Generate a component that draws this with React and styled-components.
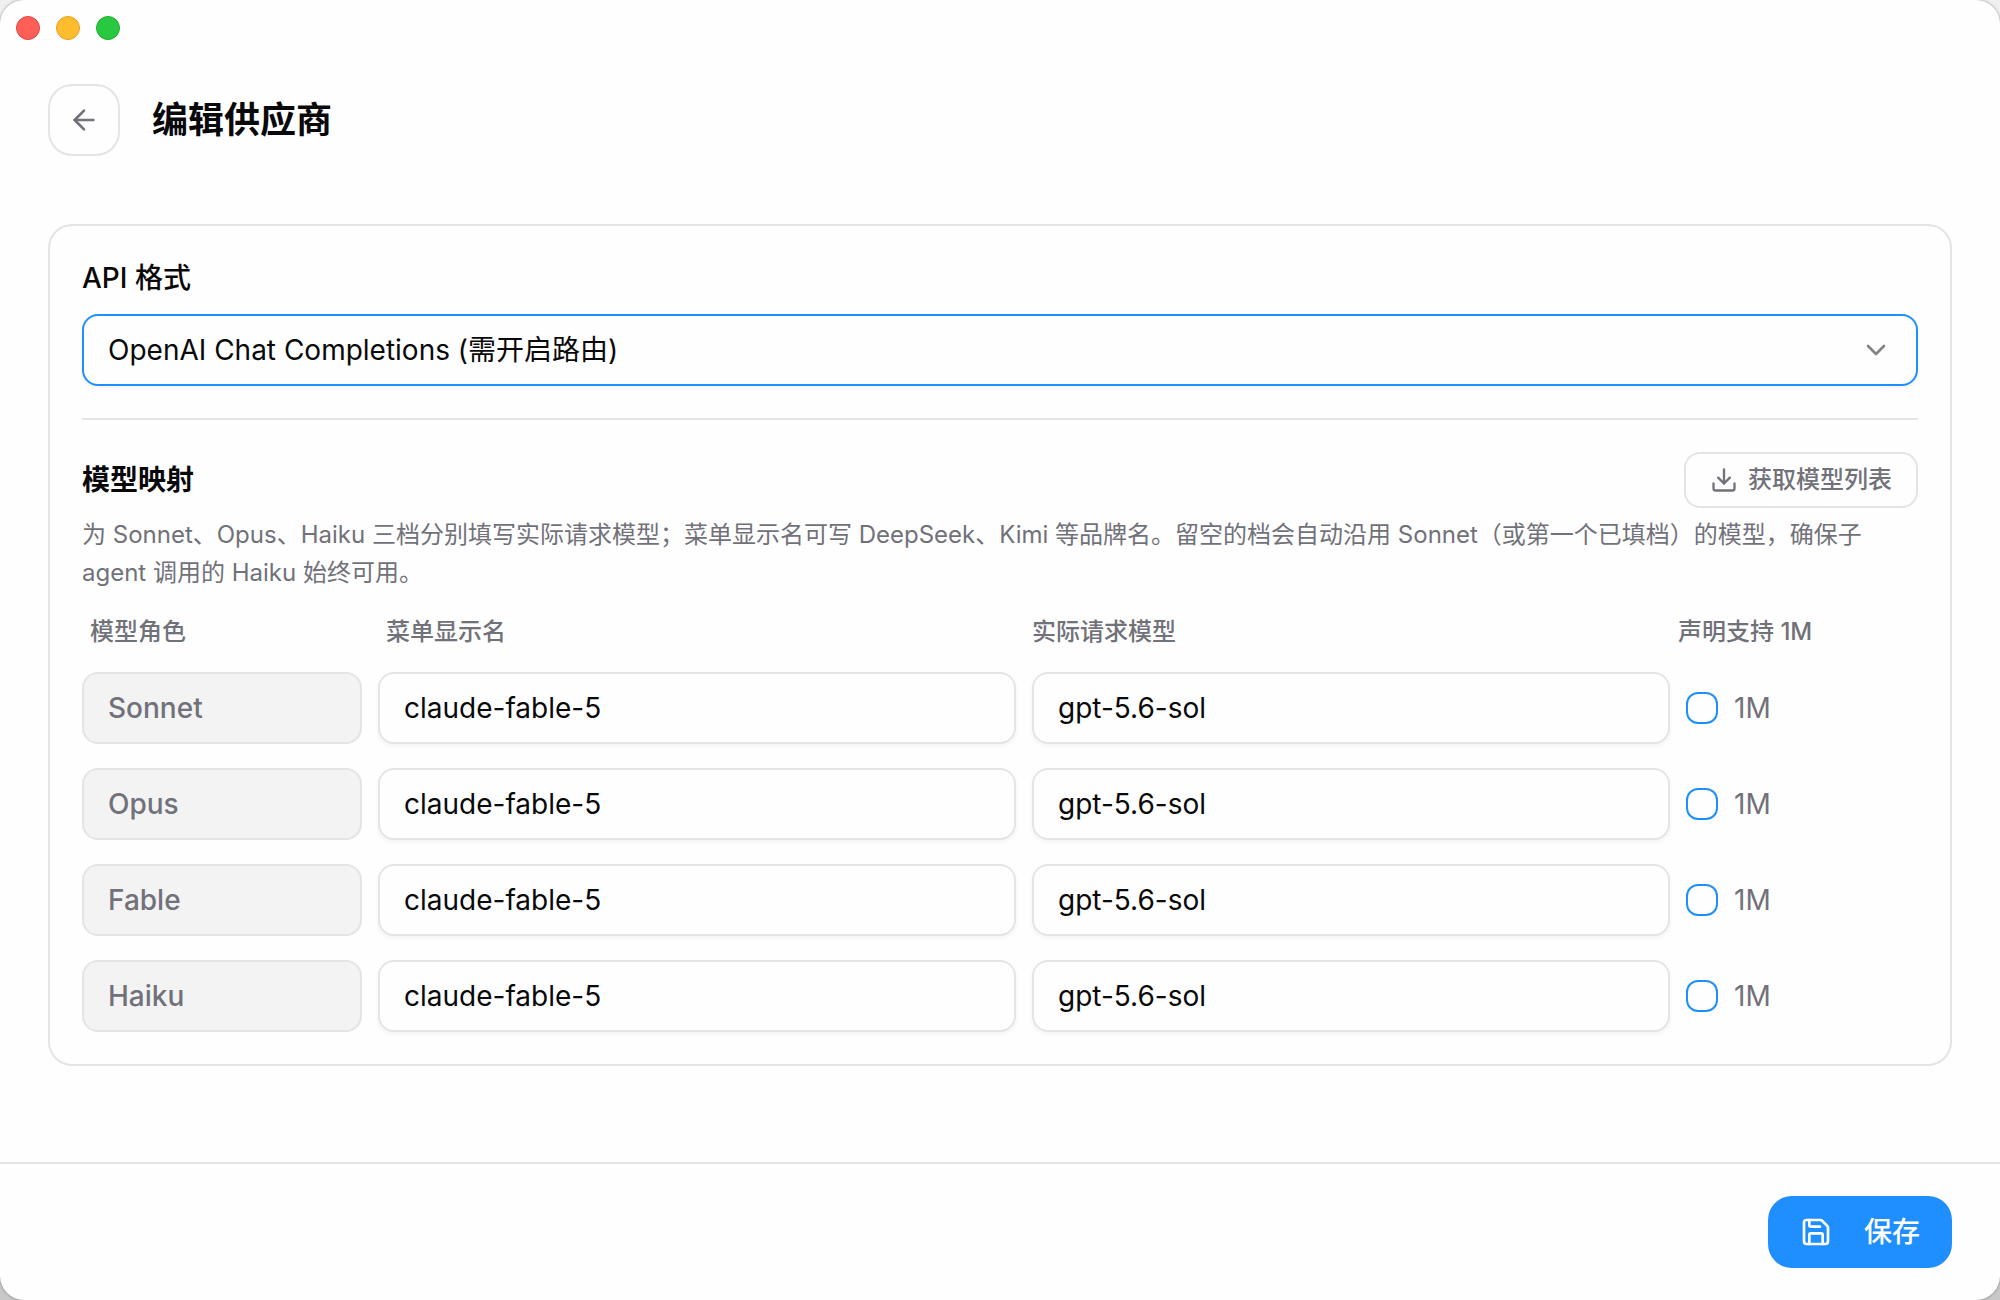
import React, { useState } from "react";
import styled, { createGlobalStyle } from "styled-components";
import { ArrowLeft, ChevronDown, Download, Save } from "lucide-react";

const initialRows = [
  { role: "Sonnet", label: "claude-fable-5", model: "gpt-5.6-sol", oneM: false },
  { role: "Opus", label: "claude-fable-5", model: "gpt-5.6-sol", oneM: false },
  { role: "Fable", label: "claude-fable-5", model: "gpt-5.6-sol", oneM: false },
  { role: "Haiku", label: "claude-fable-5", model: "gpt-5.6-sol", oneM: false },
];

function App() {
  const [format, setFormat] = useState("openai_chat");
  const [rows, setRows] = useState(initialRows);

  const updateRow = (role, patch) => {
    setRows(rows.map((row) => (row.role === role ? { ...row, ...patch } : row)));
  };

  return (
    <>
      <GlobalStyle />
      <Window>
        <TitleBar>
          <TrafficLight $color="#ff5f57" $edge="#e2463f" />
          <TrafficLight $color="#febc2e" $edge="#e0a028" />
          <TrafficLight $color="#28c840" $edge="#1eac2f" />
        </TitleBar>

        <Header>
          <BackButton type="button" aria-label="返回">
            <ArrowLeft size={32} />
          </BackButton>
          <Title>编辑供应商</Title>
        </Header>

        <Main>
          <Card>
            <FieldLabel htmlFor="api-format">API 格式</FieldLabel>
            <SelectWrapper>
              <Select
                id="api-format"
                value={format}
                onChange={(e) => setFormat(e.target.value)}
              >
                <option value="openai_chat">OpenAI Chat Completions (需开启路由)</option>
              </Select>
              <ChevronDown size={32} />
            </SelectWrapper>

            <Divider />

            <SectionHeader>
              <SectionTitle>模型映射</SectionTitle>
              <FetchButton type="button">
                <Download size={28} />
                获取模型列表
              </FetchButton>
            </SectionHeader>
            <Hint>
              为 Sonnet、Opus、Haiku 三档分别填写实际请求模型；菜单显示名可写 DeepSeek、Kimi
              等品牌名。留空的档会自动沿用 Sonnet（或第一个已填档）的模型，确保子 agent 调用的
              Haiku 始终可用。
            </Hint>

            <ColumnHeads>
              <span>模型角色</span>
              <span>菜单显示名</span>
              <span>实际请求模型</span>
              <span>声明支持 1M</span>
            </ColumnHeads>
            <Rows>
              {rows.map((row) => (
                <Row key={row.role}>
                  <RoleName>{row.role}</RoleName>
                  <TextInput
                    type="text"
                    aria-label={`${row.role} 菜单显示名`}
                    value={row.label}
                    onChange={(e) => updateRow(row.role, { label: e.target.value })}
                  />
                  <TextInput
                    type="text"
                    aria-label={`${row.role} 实际请求模型`}
                    value={row.model}
                    onChange={(e) => updateRow(row.role, { model: e.target.value })}
                  />
                  <CheckLabel>
                    <Checkbox
                      type="checkbox"
                      checked={row.oneM}
                      onChange={(e) => updateRow(row.role, { oneM: e.target.checked })}
                    />
                    1M
                  </CheckLabel>
                </Row>
              ))}
            </Rows>
          </Card>
        </Main>

        <Footer>
          <SaveButton type="button">
            <Save size={32} />
            保存
          </SaveButton>
        </Footer>
      </Window>
    </>
  );
}

const GlobalStyle = createGlobalStyle`
  *,
  *::before,
  *::after {
    box-sizing: border-box;
  }

  body {
    margin: 0;
    background: linear-gradient(#f0f0f0 50%, #c8c8c8 50%);
    color: #09090b;
    font-family: Inter, "Noto Sans CJK SC", sans-serif;
    font-size: 28px;
    line-height: 40px;
    -webkit-font-smoothing: antialiased;
  }

  button,
  input,
  select {
    font: inherit;
    color: inherit;
  }
`;

const Window = styled.div`
  display: flex;
  flex-direction: column;
  min-height: 100vh;
  background: #fefefe;
  border-radius: 24px;
  box-shadow: 0 0 3px rgba(0, 0, 0, 0.4);
  overflow: hidden;
`;

const TitleBar = styled.div`
  display: flex;
  align-items: center;
  gap: 16px;
  height: 56px;
  padding: 0 16px;
`;

const TrafficLight = styled.span`
  width: 24px;
  height: 24px;
  border: 1px solid ${(props) => props.$edge};
  border-radius: 50%;
  background: ${(props) => props.$color};
`;

const Header = styled.header`
  display: flex;
  align-items: center;
  gap: 32px;
  padding: 28px 48px 0;
`;

const BackButton = styled.button`
  display: flex;
  align-items: center;
  justify-content: center;
  width: 72px;
  height: 72px;
  padding: 0;
  color: #71717a;
  background: transparent;
  border: 2px solid #e4e4e4;
  border-radius: 24px;
`;

const Title = styled.h1`
  margin: 0;
  font-size: 36px;
  font-weight: 600;
  line-height: 56px;
`;

const Main = styled.main`
  flex: 1;
  padding: 68px 48px 48px;
`;

const Card = styled.section`
  padding: 32px;
  border: 2px solid #e4e4e4;
  border-radius: 24px;
`;

const FieldLabel = styled.label`
  display: block;
  margin-bottom: 16px;
  font-weight: 500;
`;

const SelectWrapper = styled.div`
  position: relative;

  svg {
    position: absolute;
    top: 20px;
    right: 26px;
    color: #848484;
    pointer-events: none;
  }
`;

const Select = styled.select`
  display: block;
  width: 100%;
  height: 72px;
  padding: 0 72px 0 24px;
  appearance: none;
  background: #fefefe;
  border: 2px solid #1f8fff;
  border-radius: 16px;
  box-shadow: 0 2px 4px rgba(0, 0, 0, 0.05);
  outline: none;
`;

const Divider = styled.hr`
  height: 2px;
  margin: 32px 0;
  background: #e4e4e4;
  border: 0;
`;

const SectionHeader = styled.div`
  display: flex;
  align-items: center;
  justify-content: space-between;
`;

const SectionTitle = styled.h2`
  margin: 0;
  font-size: 28px;
  font-weight: 600;
`;

const FetchButton = styled.button`
  display: flex;
  align-items: center;
  gap: 10px;
  height: 56px;
  padding: 0 24px;
  color: #71717a;
  font-size: 24px;
  font-weight: 500;
  background: transparent;
  border: 2px solid #e4e4e4;
  border-radius: 16px;
`;

const Hint = styled.p`
  margin: 8px 0 24px;
  color: #71717a;
  font-size: 24px;
  line-height: 38px;
`;

const ColumnHeads = styled.div`
  display: grid;
  grid-template-columns: 280px 1fr 1fr 232px;
  gap: 16px;
  padding: 0 8px;
  margin-bottom: 24px;
  color: #71717a;
  font-size: 24px;
  font-weight: 500;
  line-height: 32px;
`;

const Rows = styled.div`
  display: grid;
  gap: 24px;
`;

const Row = styled.div`
  display: grid;
  grid-template-columns: 280px 1fr 1fr 232px;
  align-items: center;
  gap: 16px;
`;

const RoleName = styled.div`
  display: flex;
  align-items: center;
  height: 72px;
  padding: 0 24px;
  color: #71717a;
  font-weight: 500;
  background: #f3f3f3;
  border: 2px solid #e4e4e4;
  border-radius: 16px;
`;

const TextInput = styled.input`
  width: 100%;
  min-width: 0;
  height: 72px;
  padding: 0 24px;
  background: #fefefe;
  border: 2px solid #e4e4e4;
  border-radius: 16px;
  box-shadow: 0 2px 4px rgba(0, 0, 0, 0.05);
`;

const CheckLabel = styled.label`
  display: flex;
  align-items: center;
  gap: 16px;
  color: #71717a;
`;

const Checkbox = styled.input`
  width: 32px;
  height: 32px;
  margin: 0;
  appearance: none;
  background: #fefefe;
  border: 2px solid #1f8fff;
  border-radius: 12px;

  &:checked {
    background: #1f8fff;
  }
`;

const Footer = styled.footer`
  display: flex;
  justify-content: flex-end;
  padding: 32px 48px;
  border-top: 2px solid #e4e4e4;
`;

const SaveButton = styled.button`
  display: flex;
  align-items: center;
  gap: 32px;
  height: 72px;
  padding: 0 32px;
  color: #ffffff;
  font-weight: 500;
  background: #1f8fff;
  border: 0;
  border-radius: 24px;
`;

export default App;
